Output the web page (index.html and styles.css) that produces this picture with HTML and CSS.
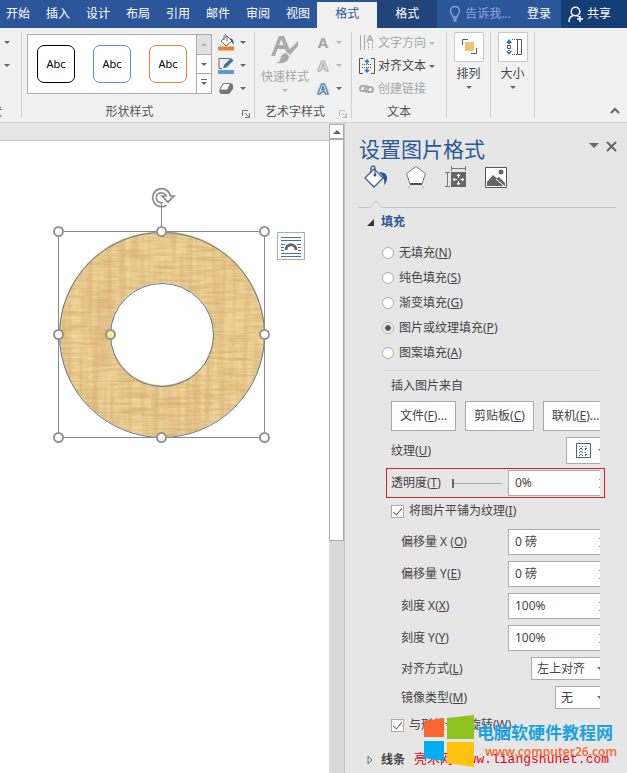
FILE: index.html
```html
<!DOCTYPE html>
<html lang="zh-CN">
<head>
    <meta charset="UTF-8">
    <meta name="viewport" content="width=device-width, initial-scale=1.0">
    <title>设置图片格式</title>
    <link rel="stylesheet" href="styles.css">
</head>
<body>

    <nav class="tabs">
        <a href="#">开始</a>
        <a href="#">插入</a>
        <a href="#">设计</a>
        <a href="#">布局</a>
        <a href="#">引用</a>
        <a href="#">邮件</a>
        <a href="#">审阅</a>
        <a href="#">视图</a>
        <a href="#" class="tool active">格式</a>
        <a href="#" class="tool dark">格式</a>
        <a href="#" class="tell">
            <svg width="12" height="16" viewBox="0 0 12 16" fill="none" stroke="#8fa9d3" stroke-width="1.3"><path d="M4 11C4 8.500 1.500 8 1.500 5a4.500 4.500 0 0 1 9 0c0 3-2.500 3.500-2.500 6zM4 13h4M4.500 15h3"/></svg>
            告诉我...
        </a>
        <a href="#" class="login">登录</a>
        <a href="#" class="share">
            <svg width="16" height="17" viewBox="0 0 16 17" fill="none" stroke="#fff" stroke-width="1.500"><circle cx="7.500" cy="5.500" r="4.300"/><path d="M1 16c0-4 2-6 4.500-6.500M9 9.500l2 1.500M12 10v6M9 13h6"/></svg>
            共享
        </a>
    </nav>

    <div class="ribbon">
        <div class="group cut">
            <div class="group-body">
                <i class="arrow"></i>
                <i class="arrow"></i>
            </div>
            <div class="group-label">状</div>
        </div>

        <div class="group shapes">
            <div class="group-body">
                <div class="gallery">
                    <button class="black">Abc</button>
                    <button class="blue">Abc</button>
                    <button class="orange">Abc</button>
                    <div class="gallery-scroll">
                        <button class="off" aria-label="上一行"><i class="arrow up"></i></button>
                        <button aria-label="下一行"><i class="arrow"></i></button>
                        <button aria-label="其他"><i class="arrow more"></i></button>
                    </div>
                </div>
                <div class="stack">
                    <button aria-label="形状填充">
                        <svg width="17" height="17" viewBox="0 0 17 17" fill="none"><path d="M3 7l6-5 5 5-6 5z" fill="#fff" stroke="#666"/><path d="M6 6V2.500a1.500 1.500 0 0 1 3 0V7" stroke="#666"/><path d="M12 4c3 1 4 3 3.500 7-1-1-1-3-2.500-4z" fill="#2b579a"/><path d="M0 12.500h16v4H0z" fill="#ed7d31"/></svg>
                        <i class="arrow"></i>
                    </button>
                    <button aria-label="形状轮廓">
                        <svg width="17" height="17" viewBox="0 0 17 17" fill="none"><path d="M12 1.500H1v10h3" stroke="#666"/><path d="M5 11l1-3 7-7 2.500 2.500-7 7z" fill="#41719c"/><path d="M0 13h16v4H0z" fill="#5b9bd5"/></svg>
                        <i class="arrow"></i>
                    </button>
                    <button aria-label="形状效果">
                        <svg width="17" height="17" viewBox="0 0 17 17"><path d="M5 3h8l2 2v4l-4 5H3l-2-2z" fill="#777"/><path d="M5.500 3.500h7L9.500 10h-8z" fill="#fff" stroke="#777"/></svg>
                        <i class="arrow"></i>
                    </button>
                </div>
            </div>
            <div class="group-label">形状样式<svg class="launcher" width="8" height="8" viewBox="0 0 8 8" fill="none" stroke="#777"><path d="M.5 6V.5H6M3 3l4 4M7.500 3v4.500H3"/></svg></div>
        </div>

        <div class="group wordart">
            <div class="group-body">
                <button class="big off">
                    <svg width="30" height="30" viewBox="0 0 30 30"><path fill-rule="evenodd" d="M1 21L9 1h5l6 14-3 3-2-4H7.500L5 21zM9 10h4.500L11.300 4.500z" fill="#aaa"/><path d="M28 6v5l-8 9-3-3z" fill="#aaa"/><path d="M16 18l3 3c0 5-4 8-13 7 4-1 4-3 5-6 1-3 3-4 5-4z" fill="#aaa"/></svg>
                    快速样式
                    <i class="arrow"></i>
                </button>
                <div class="stack">
                    <button class="off" aria-label="文本填充"><b>A</b><i class="arrow"></i></button>
                    <button class="off" aria-label="文本轮廓"><b class="hollow">A</b><i class="arrow"></i></button>
                    <button aria-label="文本效果"><b class="glow">A</b><i class="arrow"></i></button>
                </div>
            </div>
            <div class="group-label">艺术字样式<svg class="launcher" width="8" height="8" viewBox="0 0 8 8" fill="none" stroke="#bbb"><path d="M.5 6V.5H6M3 3l4 4M7.500 3v4.500H3"/></svg></div>
        </div>

        <div class="group text">
            <div class="group-body">
                <div class="stack">
                    <button class="off">
                        <svg width="16" height="16" viewBox="0 0 16 16" fill="none" stroke="#aaa"><path d="M1.500 0v15M5.500 0v15"/><path d="M9.500 8v7M13.500 8v7" stroke-dasharray="2 1"/><path d="M8 7l3-6.500L14 7M9 5h4" stroke-width="1.300"/></svg>
                        文字方向<i class="arrow"></i>
                    </button>
                    <button>
                        <svg width="16" height="16" viewBox="0 0 16 16" fill="none" stroke="#555"><path d="M4 .5H.5v15H4M12 .5h3.500v15H12"/><path d="M3 6.500h10M3 9.500h10" stroke-dasharray="1 1"/><path d="M8 6V2M6 4l2-2 2 2M8 10v4M6 12l2 2 2-2" stroke="#2e75b6" stroke-width="1.400"/></svg>
                        对齐文本<i class="arrow"></i>
                    </button>
                    <button class="off">
                        <svg width="16" height="16" viewBox="0 0 16 16" fill="none" stroke="#aaa" stroke-width="2"><rect x="1" y="5" width="8" height="5" rx="2.500"/><rect x="6" y="6" width="8" height="5" rx="2.500"/></svg>
                        创建链接
                    </button>
                </div>
            </div>
            <div class="group-label">文本</div>
        </div>

        <div class="group tile">
            <button class="big">
                <svg width="30" height="30" viewBox="0 0 30 30" fill="none"><path d="M.5.5h29v29H.5z" fill="#fff" stroke="#c8c8c8"/><path d="M11 10h9v9h-9z" fill="#f0c370"/><path d="M14 7.500H8.500V13M17 21.500h5.500V16" stroke="#555"/></svg>
                排列
                <i class="arrow"></i>
            </button>
        </div>
        <div class="group tile">
            <button class="big">
                <svg width="30" height="30" viewBox="0 0 30 30" fill="none"><path d="M.5.5h29v29H.5z" fill="#fff" stroke="#c8c8c8"/><path d="M19.500 7.500h4v15h-4z" stroke="#555"/><path d="M9.500 13.500h3v3h-3z" stroke="#555"/><path d="M14 7.500h5M14 22.500h5" stroke="#555" stroke-dasharray="1 1"/><path d="M11 7l3 4H8zM10 10h2v2h-2zM11 23l3-4H8zM10 18h2v2h-2z" fill="#2e75b6"/></svg>
                大小
                <i class="arrow"></i>
            </button>
        </div>
        <button class="collapse" aria-label="折叠功能区">
            <svg width="10" height="7" viewBox="0 0 10 7" fill="none" stroke="#666" stroke-width="2"><path d="M1 6l4-4 4 4"/></svg>
        </button>
    </div>

    <main class="work">
        <section class="document">
            <div class="page">
                <svg class="drawing" width="270" height="270" viewBox="0 0 270 270" fill="none">
                    <defs>
                        <filter id="papyrus" x="0" y="0" width="1" height="1" color-interpolation-filters="sRGB">
                            <feTurbulence type="fractalNoise" baseFrequency=".03 .35" numOctaves="3" seed="4" result="across"/>
                            <feColorMatrix in="across" values="0 0 0 0 .83  0 0 0 0 .66  0 0 0 0 .4  1.400 0 0 0 -.5" result="h"/>
                            <feTurbulence type="fractalNoise" baseFrequency=".15 .01" numOctaves="3" seed="9" result="down"/>
                            <feColorMatrix in="down" values="0 0 0 0 .84  0 0 0 0 .67  0 0 0 0 .46  1.400 0 0 0 -.5" result="v"/>
                            <feMerge result="all"><feMergeNode in="SourceGraphic"/><feMergeNode in="h"/><feMergeNode in="v"/></feMerge>
                            <feComposite in="all" in2="SourceGraphic" operator="in"/>
                        </filter>
                    </defs>
                    <path filter="url(#papyrus)" fill="#efd599" fill-rule="evenodd" d="M6 154a103 103 0 0 1 206 0a103 103 0 0 1-206 0zM58 154a51 51 0 0 0 102 0a51 51 0 0 0-102 0z"/>
                    <g stroke="#5a7d9a">
                        <circle cx="109" cy="155" r="102.500"/>
                        <circle cx="109" cy="155" r="51.500"/>
                    </g>
                    <path d="M5.500 51.500h206v206h-206zM108.500 24v27" stroke="#888"/>
                    <g fill="#fff" stroke="#939393" stroke-width="2">
                        <circle cx="5.500" cy="51.500" r="4.500"/>
                        <circle cx="108.500" cy="51.500" r="4.500"/>
                        <circle cx="211.500" cy="51.500" r="4.500"/>
                        <circle cx="5.500" cy="154.500" r="4.500"/>
                        <circle cx="211.500" cy="154.500" r="4.500"/>
                        <circle cx="5.500" cy="257.500" r="4.500"/>
                        <circle cx="108.500" cy="257.500" r="4.500"/>
                        <circle cx="211.500" cy="257.500" r="4.500"/>
                        <circle cx="57.500" cy="154.500" r="4.500" fill="#ffeb86"/>
                    </g>
                    <path d="M113.500 25.300A9 9 0 1 1 117.500 16H121l-6 6-6-6h4a5 5 0 1 0-3 6.500" stroke="#8c8c8c" stroke-width="1.700"/>
                    <g>
                        <path d="M224.500 52.500h27v27h-27z" fill="#fff" stroke="#ababab"/>
                        <path d="M228 57.500h20M228 60.500h20M228 73.500h20M228 76.500h20M228 64.500h4M228 67.500h3M228 70.500h3M244 64.500h4M245 67.500h3M245 70.500h3" stroke="#41799c"/>
                        <path d="M233 70c0-7 10-7 10 0" stroke="#666" stroke-width="3"/>
                    </g>
                </svg>
            </div>
            <div class="scrollbar">
                <button aria-label="向上滚动"><svg width="8" height="4" viewBox="0 0 8 4"><path d="M0 4l4-4 4 4z" fill="#666"/></svg></button>
                <div class="thumb"></div>
            </div>
        </section>

        <aside class="pane">
            <header>
                <h1>设置图片格式</h1>
                <button aria-label="任务窗格选项"><svg width="10" height="6" viewBox="0 0 10 6"><path d="M0 0h10L5 5z" fill="#666"/></svg></button>
                <button aria-label="关闭"><svg width="11" height="11" viewBox="0 0 11 11" stroke="#666" stroke-width="2"><path d="M1 1l9 9M10 1l-9 9"/></svg></button>
            </header>

            <div class="pane-tabs">
                <button aria-label="填充与线条">
                    <svg width="26" height="24" viewBox="0 0 26 24" fill="none"><path d="M2 13L11 4l9 9-9 9z" fill="#fff" stroke="#44618f" stroke-width="1.300"/><path d="M8 8V3a2 2 0 0 1 4 0v7" stroke="#44618f" stroke-width="1.300"/><circle cx="12" cy="10" r="1.500" fill="#2b579a"/><path d="M16 7c5 0 8 2 8 6 0 3-1 5-3 7 1-4 0-8-5-13z" fill="#2b579a"/></svg>
                </button>
                <button aria-label="效果">
                    <svg width="26" height="24" viewBox="0 0 26 24" fill="none"><path d="M13 1.500l9.500 7L19 19H7L3.500 8.500z" fill="#fff" stroke="#777"/><path d="M7 19h12" stroke="#555" stroke-width="2"/><path d="M7 20l-2 4M19 20l2 4" stroke="#bbb"/></svg>
                </button>
                <button aria-label="布局属性">
                    <svg width="26" height="24" viewBox="0 0 26 24" fill="none"><path d="M8 7h15v15H8z" fill="#666"/><path d="M8.500 1v5M22.500 1v5M9 3.500h13M2 7.500h5M2 21.500h5M4.500 8v13" stroke="#777"/><path d="M15.500 9v4M15.500 16v4M10 14.500h4M17 14.500h4" stroke="#fff"/><path d="M14 11l1.500-2 1.500 2M14 18l1.500 2 1.500-2M12 13l-2 1.500 2 1.500M19 13l2 1.500-2 1.500" stroke="#fff"/></svg>
                </button>
                <button aria-label="图片">
                    <svg width="26" height="24" viewBox="0 0 26 24" fill="none"><path d="M2.500 2.500h21v20h-21z" fill="#fff" stroke="#555"/><circle cx="18" cy="7" r="2.500" fill="#666"/><path d="M4 21v-4l6-7 8 7 4 4z" fill="#666"/><path d="M13 14l3-2 6 6v3z" fill="#666"/><path d="M13 14l8 7" stroke="#fff"/></svg>
                </button>
            </div>
            <div class="divider">
                <svg width="34" height="12" viewBox="0 0 34 12" fill="none" stroke="#c3c3c3"><path d="M0 10.500h11l6-7 6 7h11"/></svg>
                <span></span>
            </div>

            <h2><svg width="7" height="7" viewBox="0 0 7 7"><path d="M7 0v7H0z" fill="#333"/></svg>填充</h2>

            <form class="fill-form">
                <label class="radio"><input type="radio" name="fill"><span>无填充(<u>N</u>)</span></label>
                <label class="radio"><input type="radio" name="fill"><span>纯色填充(<u>S</u>)</span></label>
                <label class="radio"><input type="radio" name="fill"><span>渐变填充(<u>G</u>)</span></label>
                <label class="radio"><input type="radio" name="fill" checked><span>图片或纹理填充(<u>P</u>)</span></label>
                <label class="radio"><input type="radio" name="fill"><span>图案填充(<u>A</u>)</span></label>
                <hr>

                <div class="caption">插入图片来自</div>
                <div class="sources">
                    <button type="button">文件(<u>F</u>)...</button>
                    <button type="button">剪贴板(<u>C</u>)</button>
                    <button type="button">联机(<u>E</u>)...</button>
                </div>

                <div class="row">
                    <span>纹理(<u>U</u>)</span>
                    <button type="button" class="texture" aria-label="纹理">
                        <svg width="15" height="15" viewBox="0 0 15 15" fill="none" stroke="#44667f"><path d="M.5.5h14v14H.5z"/><path d="M3 3.500h9M3 6.500h5M3 9.500h9M3 12.500h9M9 6.500h3" stroke-dasharray="1 2"/><path d="M4 5.500h8M4 8.500h3M4 11.500h8" stroke-dasharray="2 3"/></svg>
                        <i class="arrow"></i>
                    </button>
                </div>

                <div class="row marked">
                    <label for="alpha">透明度(<u>T</u>)</label>
                    <input type="range" id="alpha" min="0" max="100" value="0">
                    <div class="field"><input type="text" value="0%" aria-label="透明度"><i class="spin"></i></div>
                </div>

                <label class="check"><input type="checkbox" checked><span>将图片平铺为纹理(<u>I</u>)</span></label>

                <div class="offsets">
                    <div class="row sub">
                        <label for="offx">偏移量 X (<u>O</u>)</label>
                        <div class="field"><input type="text" id="offx" value="0 磅"><i class="spin"></i></div>
                    </div>
                    <div class="row sub">
                        <label for="offy">偏移量 Y(<u>E</u>)</label>
                        <div class="field"><input type="text" id="offy" value="0 磅"><i class="spin"></i></div>
                    </div>
                    <div class="row sub">
                        <label for="scalex">刻度 X(<u>X</u>)</label>
                        <div class="field"><input type="text" id="scalex" value="100%"><i class="spin"></i></div>
                    </div>
                    <div class="row sub">
                        <label for="scaley">刻度 Y(<u>Y</u>)</label>
                        <div class="field"><input type="text" id="scaley" value="100%"><i class="spin"></i></div>
                    </div>
                    <div class="row sub pick">
                        <label for="align">对齐方式(<u>L</u>)</label>
                        <div class="field wide"><select id="align"><option>左上对齐</option></select><i class="arrow"></i></div>
                    </div>
                    <div class="row sub pick">
                        <label for="mirror">镜像类型(<u>M</u>)</label>
                        <div class="field narrow"><select id="mirror"><option>无</option></select><i class="arrow"></i></div>
                    </div>
                </div>

                <label class="check"><input type="checkbox" checked><span>与形状一起旋转(<u>W</u>)</span></label>
            </form>

            <h2 class="line"><svg width="7" height="10" viewBox="0 0 7 10" fill="none" stroke="#777"><path d="M1 1l4 4-4 4z"/></svg>线条 <span class="site">亮术网 www.liangshunet.com</span></h2>

            <div class="watermark">
                <svg width="50" height="52" viewBox="0 0 50 52"><path d="M0 6l20-3v19H0z" fill="#f9672e"/><path d="M23 3l27-3v24H23z" fill="#8fc31f"/><path d="M0 26h20v20L0 43z" fill="#00adef"/><path d="M23 27h27v25l-27-4z" fill="#ffc20e"/></svg>
                <div>
                    <strong>电脑软硬件教程网</strong>
                    <em>www.computer26.com</em>
                </div>
            </div>
        </aside>
    </main>

</body>
</html>
```
FILE: styles.css
```css
* {
    box-sizing: border-box;
}

body {
    margin: 0;
    min-height: 100vh;
    display: flex;
    flex-direction: column;
    font-family: "Noto Sans", "Noto Sans CJK SC", sans-serif;
    font-size: 12px;
    line-height: 16px;
    color: #444;
    background-color: #e6e6e6;
    overflow: hidden;
}

button, input, select {
    font: inherit;
    color: inherit;
    margin: 0;
    padding: 0;
    border: 0;
    background: none;
}

svg {
    flex: none;
}

/* title tabs */
.tabs {
    display: flex;
    height: 28px;
    background-color: #2b579a;
}

.tabs a {
    display: flex;
    align-items: center;
    flex: none;
    padding: 0 8px;
    color: #fff;
    text-decoration: none;
    white-space: nowrap;
}

.tabs a:first-child {
    padding-left: 6px;
}

.tabs .tool {
    padding: 0 18px;
}

.tabs .active {
    margin: 2px 0 0 -1px;
    padding-bottom: 2px;
    background-color: #f1f1f1;
    color: #2b579a;
}

.tabs .dark {
    background-color: #21447a;
}

.tabs .tell {
    gap: 4px;
    padding: 0 0 0 12px;
    color: #8fa9d3;
}

.tabs .login {
    margin-left: auto;
    padding-right: 10px;
}

.tabs .share {
    gap: 3px;
    width: 66px;
    padding-left: 7px;
    background-color: #153d75;
}

/* ribbon */
.ribbon {
    display: flex;
    height: 95px;
    padding: 4px 0;
    background-color: #f1f1f1;
    border-bottom: 1px solid #d2d2d2;
}

.group {
    display: flex;
    flex-direction: column;
    flex: none;
    border-right: 1px solid #d0d0d0;
}

.group-body {
    display: flex;
    flex: 1;
    min-height: 0;
}

.group-label {
    height: 12px;
    line-height: 12px;
    display: flex;
    align-items: center;
    justify-content: center;
    position: relative;
    color: #555;
}

.launcher {
    position: absolute;
    right: 4px;
    bottom: 0;
}

.arrow {
    flex: none;
    width: 0;
    height: 0;
    border: 3px solid transparent;
    border-top-color: #666;
    border-bottom-width: 0;
}

.arrow.up {
    border-top-width: 0;
    border-bottom: 3px solid #666;
}

.arrow.more {
    position: relative;
}

.arrow.more::before {
    content: "";
    position: absolute;
    left: -3px;
    top: -6px;
    width: 6px;
    height: 1px;
    background-color: #666;
}

.off {
    color: #a6a6a6;
}

.off .arrow {
    border-top-color: #b8b8b8;
}

.cut {
    width: 22px;
}

.cut .group-body {
    flex-direction: column;
    align-items: flex-end;
    gap: 20px;
    padding: 9px 11px 0 0;
}

.cut .group-label {
    justify-content: flex-start;
    margin-left: -10px;
}

.shapes {
    width: 233px;
    padding-left: 5px;
}

.shapes .group-label {
    padding-right: 22px;
}

.gallery {
    display: flex;
    align-items: center;
    gap: 18px;
    width: 185px;
    height: 60px;
    margin: 2px 6px 0 0;
    padding-left: 9px;
    border: 1px solid #ababab;
    background-color: #fff;
}

.gallery > button {
    flex: none;
    width: 38px;
    height: 38px;
    border: 1px solid #000;
    border-radius: 7px;
    font-size: 11px;
    color: #000;
}

.gallery > .blue {
    border-color: #5b8fc7;
}

.gallery > .orange {
    border-color: #d9863a;
}

.gallery-scroll {
    display: flex;
    flex-direction: column;
    align-self: stretch;
    width: 15px;
    margin-left: -9px;
    border-left: 1px solid #ababab;
}

.gallery-scroll button {
    display: flex;
    flex: 1;
    align-items: center;
    justify-content: center;
    border-bottom: 1px solid #ababab;
}

.gallery-scroll button:last-child {
    border-bottom: 0;
}

.gallery-scroll .off {
    background-color: #e1e1e1;
}

.gallery-scroll .off .arrow {
    border-bottom-color: #b0b0b0;
}

.stack {
    display: flex;
    flex-direction: column;
    gap: 7px;
    padding-top: 2px;
}

.stack button {
    display: flex;
    align-items: center;
    gap: 5px;
    height: 16px;
    white-space: nowrap;
}

.wordart {
    width: 97px;
    padding-left: 5px;
}

.wordart .stack {
    padding-left: 7px;
}

.wordart .stack button {
    gap: 7px;
}

.wordart .stack b {
    width: 12px;
    font-size: 15px;
}

.wordart .hollow {
    color: #f1f1f1;
    -webkit-text-stroke: 1px #aaa;
}

.wordart .glow {
    color: #fff;
    -webkit-text-stroke: 1px #41719c;
    text-shadow: 0 0 3px #5b9bd5;
}

.wordart .group-label {
    padding-right: 21px;
}

.big {
    display: flex;
    flex-direction: column;
    align-items: center;
    gap: 4px;
    white-space: nowrap;
}

.wordart .big {
    padding-top: 3px;
    width: 50px;
}

.text {
    width: 95px;
    padding-left: 7px;
}

.text .group-label {
    padding-right: 7px;
}

.text .stack {
    padding-top: 3px;
}

.text .stack button {
    gap: 3px;
}

.tile {
    width: 44px;
    align-items: center;
}

.collapse {
    margin: auto 7px 0 auto;
}

/* document */
.work {
    display: flex;
    flex: 1;
}

.document {
    display: flex;
    flex: 1;
    min-width: 0;
}

.page {
    flex: 1;
    margin-top: 17px;
    padding: 39px 0 0 53px;
    border-top: 1px solid #c6c6c6;
    background-color: #fff;
}

.drawing {
    display: block;
}

.scrollbar {
    display: flex;
    flex-direction: column;
    width: 15px;
    padding-top: 1px;
    background-color: #dadada;
}

.scrollbar button {
    display: flex;
    align-items: center;
    justify-content: center;
    height: 15px;
    border: 1px solid #ababab;
    background-color: #fff;
}

.scrollbar .thumb {
    height: 62%;
    border: 1px solid #ababab;
    background-color: #fff;
}

/* format pane */
.pane {
    position: relative;
    flex: none;
    width: 283px;
    padding: 0 11px 0 14px;
    border-left: 1px solid #c3c3c3;
}

.pane header {
    display: flex;
    align-items: center;
    gap: 8px;
    height: 42px;
    padding-top: 10px;
}

.pane header button {
    display: flex;
    margin: -6px -1px 0 0;
}

.pane h1 {
    flex: 1;
    margin: 0;
    font-size: 21px;
    font-weight: normal;
    line-height: 28px;
    color: #2b579a;
}

.pane-tabs {
    display: flex;
    gap: 14px;
    padding-left: 4px;
}

.pane-tabs button {
    display: flex;
}

.divider {
    display: flex;
    margin-top: 8px;
}

.divider svg {
    display: block;
}

.divider span {
    flex: 1;
    margin-bottom: 1px;
    border-bottom: 1px solid #c3c3c3;
}

.pane h2 {
    display: flex;
    align-items: center;
    gap: 7px;
    height: 26px;
    margin: 0;
    padding-left: 8px;
    font-size: 12px;
    color: #2b579a;
}

.fill-form {
    margin: 5px 16px 0 23px;
}

.radio, .check {
    display: flex;
    align-items: center;
    gap: 5px;
    height: 25px;
    white-space: nowrap;
}

.radio input {
    appearance: none;
    width: 12px;
    height: 12px;
    border: 1px solid #ababab;
    border-radius: 50%;
    background-color: #fff;
}

.radio input:checked {
    background-image: radial-gradient(circle, #555 2px, #fff 4px);
}

.check {
    height: 26px;
    padding-left: 9px;
}

.check input {
    appearance: none;
    display: flex;
    align-items: center;
    justify-content: center;
    width: 13px;
    height: 13px;
    border: 1px solid #ababab;
    background-color: #fff;
}

.check input:checked::before {
    content: "";
    width: 4px;
    height: 8px;
    margin-bottom: 2px;
    border: solid #666;
    border-width: 0 1px 1px 0;
    transform: rotate(40deg);
}

hr {
    margin: 5px 0 4px 2px;
    border: 0;
    border-top: 1px solid #dadada;
}

.caption {
    height: 21px;
    padding-left: 9px;
    line-height: 21px;
}

.sources {
    display: flex;
    gap: 9px;
    margin: 5px 0 6px 9px;
    overflow: hidden;
}

.sources button {
    flex: none;
    height: 30px;
    padding: 0 8px;
    border: 1px solid #ababab;
    background-color: #fdfdfd;
}

.row {
    display: flex;
    align-items: center;
    justify-content: space-between;
    height: 32px;
    padding-left: 9px;
    white-space: nowrap;
}

.row:has(.texture) {
    height: 27px;
}

.texture {
    display: flex;
    align-items: center;
    gap: 7px;
    width: 34px;
    height: 27px;
    padding-left: 9px;
    overflow: hidden;
    border: 1px solid #ababab;
    border-right: 0;
    background-color: #fdfdfd;
}

.marked {
    height: 30px;
    margin: 4px -5px 0 4px;
    padding: 0 4px;
    border: 1px solid #d8232a;
}

.sub {
    padding-left: 19px;
}

.offsets {
    padding-top: 2px;
}

.pick {
    height: 29px;
}

.field {
    display: flex;
    align-items: center;
    width: 92px;
    height: 26px;
    padding-left: 6px;
    overflow: hidden;
    border: 1px solid #ababab;
    border-right: 0;
    background-color: #fff;
}

.field input, .field select {
    appearance: none;
    flex: 1;
    min-width: 0;
    outline: 0;
}

.field .arrow {
    margin-right: -3px;
}

.field.wide {
    width: 69px;
    height: 23px;
    padding-left: 5px;
}

.field.narrow {
    width: 45px;
    height: 23px;
    padding-left: 5px;
}

.spin {
    width: 1px;
    height: 9px;
    border: solid #999;
    border-width: 1px 0;
}

#alpha {
    appearance: none;
    width: 50px;
    height: 10px;
    margin-left: 6px;
    background: linear-gradient(#ababab, #ababab) center / 100% 1px no-repeat;
}

#alpha::-webkit-slider-thumb {
    appearance: none;
    width: 2px;
    height: 9px;
    background-color: #666;
}

.pane .line {
    margin-top: 9px;
    color: #444;
    white-space: nowrap;
}

.site {
    padding-left: 2px;
    font-family: "Liberation Mono", "Noto Sans CJK SC", monospace;
    font-size: 13px;
    font-weight: normal;
    color: #e60012;
}

/* site badge over the lower corner of the pane */
.watermark {
    position: absolute;
    right: 10px;
    bottom: 6px;
    display: flex;
    align-items: center;
    gap: 3px;
    white-space: nowrap;
}

.watermark div {
    display: flex;
    flex-direction: column;
}

.watermark strong {
    font-size: 17px;
    line-height: 22px;
    color: #1ba1e2;
}

.watermark em {
    padding-left: 8px;
    font-size: 12px;
    font-style: normal;
    font-weight: 600;
    color: #f0703a;
}
```
